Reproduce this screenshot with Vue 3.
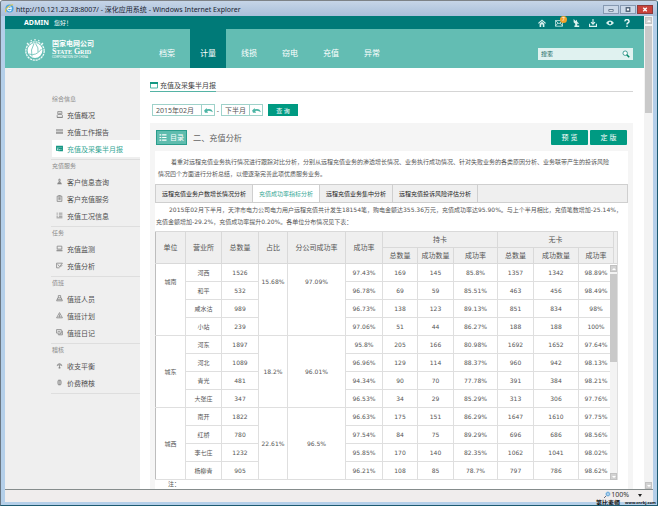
<script setup>
import { ref } from 'vue'

const navItems = ['档案', '计量', '线损', '窃电', '充值', '异常']
const activeNav = ref('计量')

const menuGroups = [
  {
    title: '综合信息',
    items: [
      { label: '充值概况', icon: 'M3 1h7v5H3zM4 4h5M2 7v4h9V7M2 11h9' },
      { label: '充值工作报告', icon: 'M0 3h12M0 5h12M0 8h12M0 9h12' },
      { label: '充值及采集半月报', icon: 'M1 2h10v3H1zM1 3h10M1 5v4h3M5 6h6v4H5zM7 8h3' },
    ],
  },
  {
    title: '充值服务',
    items: [
      { label: '客户信息查询', icon: 'M5 2h2v4H5zM4 8h4v1H4zM2 10h8M3 9h6' },
      { label: '客户充值服务', icon: 'M2 2h8v9H2zM4 1h4M4 4h4M4 6h4M4 8h4' },
      { label: '充值工况信息', icon: 'M1 2h2M5 2h6M1 5h2M5 5h6M1 8h2M5 8h6M1 10h10' },
    ],
  },
  {
    title: '任务',
    items: [
      { label: '充值监测', icon: 'M2 2h8v5H2zM1 9h10M1 10h10' },
      { label: '充值分析', icon: 'M1 2h10M1 2v8h5M3 4l3 4l5-6M7 9l4-4' },
    ],
  },
  {
    title: '值班',
    items: [
      { label: '值班人员', icon: 'M4 5V1h4v4M3 5h6l2 5H1zM2 8h8' },
      { label: '值班计划', icon: 'M6 1l5 9H1zM6 4v3M6 8v1M4 8h4' },
      { label: '值班日记', icon: 'M1 1h8v6H1zM4 8v2h7V3M3 4h4M9 7l-3 3' },
    ],
  },
  {
    title: '稽核',
    items: [
      { label: '收支平衡', icon: 'M2 7a4 4 0 1 1 8 0M4 6a2 2 0 1 1 4 0M6 5v6M4 10h4' },
      { label: '价费稽核', icon: 'M3 3h6M2 5h8M2 7h8M3 9h6M4 2h4M4 10h4' },
    ],
  },
]
const activeMenu = ref('充值及采集半月报')

const tabs = ['远程充值业务户数增长情况分析', '充值成功率指标分析', '远程充值业务集中分析', '远程充值投诉风险评估分析']
const activeTab = ref('充值成功率指标分析')

const month = ref('2015年02月')
const half = ref('下半月')
const keyword = ref('')

const columns = ['unit', 'office', 'total', 'share', 'branch', 'rate', 'a1', 'a2', 'a3', 'b1', 'b2', 'b3', 'gutter']

const units = [
  {
    name: '城南', share: '15.68%', rate: '97.09%',
    rows: [
      ['河西', '1526', '97.43%', '169', '145', '85.8%', '1357', '1342', '98.89%'],
      ['和平', '532', '96.78%', '69', '59', '85.51%', '463', '456', '98.49%'],
      ['咸水沽', '989', '96.73%', '138', '123', '89.13%', '851', '834', '98%'],
      ['小站', '239', '97.06%', '51', '44', '86.27%', '188', '188', '100%'],
    ],
  },
  {
    name: '城东', share: '18.2%', rate: '96.01%',
    rows: [
      ['河东', '1897', '95.8%', '205', '166', '80.98%', '1692', '1652', '97.64%'],
      ['河北', '1089', '96.96%', '129', '114', '88.37%', '960', '942', '98.13%'],
      ['青光', '481', '94.34%', '90', '70', '77.78%', '391', '384', '98.21%'],
      ['大张庄', '347', '96.53%', '34', '29', '85.29%', '313', '306', '97.76%'],
    ],
  },
  {
    name: '城西', share: '22.61%', rate: '96.5%',
    rows: [
      ['南开', '1822', '96.63%', '175', '151', '86.29%', '1647', '1610', '97.75%'],
      ['红桥', '780', '97.54%', '84', '75', '89.29%', '696', '686', '98.56%'],
      ['李七庄', '1232', '95.85%', '170', '140', '82.35%', '1062', '1041', '98.02%'],
      ['杨柳青', '905', '96.21%', '108', '85', '78.7%', '797', '786', '98.62%'],
    ],
  },
]
</script>

<template>
  <div class="window">
    <header class="titlebar">
      <svg class="ie" viewBox="0 0 10 10">
        <circle cx="5" cy="5" r="4.500" fill="#4aa3df" />
        <path d="M3 5h4a2 2 0 0 0-4 0a2 2 0 0 0 4 1" fill="none" stroke="#e8f5ff" stroke-width="1.2" />
        <path d="M1 9C-1 6 6 0 9 1" fill="none" stroke="#e8c544" stroke-width="1.2" />
      </svg>
      <span class="caption">http://10.121.23.28:8007/ - 深化应用系统 - Windows Internet Explorer</span>
      <button class="win" aria-label="最小化"><svg viewBox="0 0 15 8"><path d="M5 4h5v2H5z" fill="#fff" stroke="#5c6f86" /></svg></button>
      <button class="win" aria-label="最大化"><svg viewBox="0 0 15 8"><path d="M5.500 2h4v4h-4z" fill="#fff" stroke="#55667b" stroke-width="1.500" /></svg></button>
      <button class="win close" aria-label="关闭"><svg viewBox="0 0 15 8"><path d="M5.500 2l4 4M9.500 2l-4 4" stroke="#fff" stroke-width="1.600" /></svg></button>
    </header>

    <div class="viewport">
      <div class="page">
        <div class="topbar">
          <b>ADMIN</b><span class="hello">您好！</span>
          <nav class="tools">
            <a href="#" aria-label="首页"><svg viewBox="0 0 10 10"><path d="M0 5l5-4.500L10 5L9 6L5 2.500L1 6zM2 6l3-2.500L8 6v4H6V7H4v3H2z" fill="#d9f1ee" /></svg></a>
            <a href="#" class="mail" aria-label="消息"><svg viewBox="0 0 10 10"><path d="M.5 2h9v7h-9zL5 6l4.500-4M.5 9l3-4M9.500 9L6.500 5" fill="none" stroke="#d9f1ee" /></svg><i class="badge">7</i></a>
            <a href="#" aria-label="信号"><svg viewBox="0 0 10 10"><path d="M2 0l2.500 2.500L6 1l.5 2.500L9 6H6.500v2H9v2H3V8h1V6L2 4z" fill="#d9f1ee" /></svg></a>
            <a href="#" aria-label="下载"><svg viewBox="0 0 10 10"><path d="M5 0v6M2.500 4L5 6.500L7.500 4M.7 6v3.200h8.600V6" fill="none" stroke="#d9f1ee" stroke-width="1.400" /></svg></a>
            <a href="#" aria-label="查看"><svg viewBox="0 0 10 10"><path d="M0 5Q5-1 10 5Q5 11 0 5z" fill="#d9f1ee" /><circle cx="5" cy="5" r="1.600" fill="#007a78" /></svg></a>
            <a href="#" aria-label="帮助"><svg viewBox="0 0 10 10"><path d="M2.500 3a2.500 2.300 0 1 1 3.500 2Q5 5.500 5 7M5 8.200V10" fill="none" stroke="#e6f7f5" stroke-width="1.800" /></svg></a>
          </nav>
        </div>

        <div class="banner">
          <div class="brand">
            <svg class="logo" viewBox="0 0 22 22">
              <circle cx="11" cy="12" r="9.200" fill="none" stroke="#eefaf8" stroke-width="1.300" stroke-dasharray="2.200 .7" />
              <circle cx="11" cy="11.500" r="7.400" fill="#fff" />
              <path d="M10 4.500Q6 11 8 17.500M11.500 4.500Q15 9 14 13M5 15Q12 17.500 17.500 10" fill="none" stroke="#63bdb3" stroke-width=".8" />
              <path d="M3 4l1 1M7 1l.5 1.200M11 0v1.500M15 1l-.5 1.200M19 4l-1 1" stroke="#eefaf8" stroke-width="1.300" />
            </svg>
            <div class="brand-text">
              <strong class="cn">国家电网公司</strong>
              <strong class="en">State Grid</strong>
              <span class="corp">CORPORATION OF CHINA</span>
            </div>
          </div>
          <nav class="nav">
            <a v-for="item in navItems" :key="item" href="#" :class="{ active: item === activeNav }" @click.prevent="activeNav = item">{{ item }}</a>
          </nav>
          <form class="search" @submit.prevent>
            <input v-model="keyword" type="text" placeholder="搜索" aria-label="搜索">
            <button aria-label="搜索"><svg viewBox="0 0 10 10"><circle cx="4" cy="4" r="2.800" fill="#fff" stroke="#1d8c80" /><path d="M6 6l3 3" stroke="#086" stroke-width="2" /></svg></button>
          </form>
        </div>

        <div class="columns">
          <aside class="sidebar">
            <section v-for="group in menuGroups" :key="group.title" class="group">
              <h3>{{ group.title }}</h3>
              <a v-for="item in group.items" :key="item.label" href="#" :class="{ active: item.label === activeMenu }" @click.prevent="activeMenu = item.label">
                <svg viewBox="0 0 12 12"><path :d="item.icon" /></svg>{{ item.label }}
              </a>
            </section>
          </aside>

          <main class="main">
            <div class="heading">
              <h2>
                <svg viewBox="0 0 8 8"><path d="M.5 3v4h7V3" fill="none" stroke="#4db5a5" /><path d="M0 1h8v2H0z" fill="#159783" /></svg>充值及采集半月报
              </h2>
            </div>

            <form class="filter" @submit.prevent>
              <span class="picker month">
                <input v-model="month" type="text" aria-label="月份">
                <button aria-label="选择月份"><svg viewBox="0 0 10 8"><path d="M0 4l3-3v1.500Q9 1 10 6Q7 3.500 3.500 4.500L4.500 6.500H1z" fill="#4db5a5" /></svg></button>
              </span>
              <span class="dash">-</span>
              <span class="picker half">
                <input v-model="half" type="text" aria-label="半月">
                <button aria-label="选择半月"><svg viewBox="0 0 10 8"><path d="M0 4l3-3v1.500Q9 1 10 6Q7 3.500 3.500 4.500L4.500 6.500H1z" fill="#4db5a5" /></svg></button>
              </span>
              <button class="query">查 询</button>
            </form>

            <div class="panel">
              <div class="panel-head">
                <button class="toc"><svg viewBox="0 0 8 8"><path d="M0 1h2M3 1h5M0 4h2M3 4h5M0 7h2M3 7h5" stroke="#fff" stroke-width="1.300" /></svg>目录</button>
                <h3>二、充值分析</h3>
                <button class="action">预 览</button>
                <button class="action">定 版</button>
              </div>
              <div class="sheet">
                <p class="intro">着重对远程充值业务执行情况进行跟踪对比分析，分别从远程充值业务的渗透增长情况、业务执行成功情况、针对失败业务的各类原因分析、业务联带产生的投诉风险<br>情况四个方面进行分析总结，以便逐渐完善此项优质服务业务。</p>
                <div class="tabs" role="tablist">
                  <button v-for="tab in tabs" :key="tab" role="tab" :aria-selected="tab === activeTab" :class="{ active: tab === activeTab }" @click="activeTab = tab">{{ tab }}</button>
                </div>
                <p class="summary">2015年02月下半月，天津市电力公司电力用户远程充值共计发生18154笔，购电金额达355.36万元，充值成功率达95.90%。与上个半月相比，充值笔数增加-25.14%，<br>充值金额增加-29.2%，充值成功率提升0.20%。各单位分布情况见下表：</p>

                <div class="table-box">
                  <table>
                    <colgroup><col v-for="c in columns" :key="c" :class="c"></colgroup>
                    <thead>
                      <tr>
                        <th rowspan="2">单位</th>
                        <th rowspan="2">营业所</th>
                        <th rowspan="2">总数量</th>
                        <th rowspan="2">占比</th>
                        <th rowspan="2">分公司成功率</th>
                        <th rowspan="2">成功率</th>
                        <th colspan="3">持卡</th>
                        <th colspan="3">无卡</th>
                        <th rowspan="2"></th>
                      </tr>
                      <tr>
                        <th>总数量</th><th>成功数量</th><th>成功率</th>
                        <th>总数量</th><th>成功数量</th><th>成功率</th>
                      </tr>
                    </thead>
                    <tbody v-for="unit in units" :key="unit.name">
                      <tr v-for="(row, i) in unit.rows" :key="row[0]">
                        <td v-if="i === 0" rowspan="4" class="span">{{ unit.name }}</td>
                        <td>{{ row[0] }}</td>
                        <td>{{ row[1] }}</td>
                        <td v-if="i === 0" rowspan="4" class="span">{{ unit.share }}</td>
                        <td v-if="i === 0" rowspan="4" class="span">{{ unit.rate }}</td>
                        <td v-for="n in 6" :key="n">{{ row[n + 1] }}</td>
                        <td colspan="2" class="last">{{ row[8] }}</td>
                      </tr>
                    </tbody>
                  </table>
                  <div class="scroll inner"><i class="arrow up"></i><i class="thumb"></i><i class="arrow down"></i></div>
                </div>
                <p class="note">注：</p>
              </div>
            </div>
          </main>
        </div>
      </div>
      <div class="scroll outer"><i class="arrow up"></i><i class="thumb"></i><i class="arrow down"></i></div>
    </div>

    <footer class="status">
      <svg class="lens" viewBox="0 0 8 8"><circle cx="4.500" cy="3.500" r="2.600" fill="#3c8fd0" stroke="#bcd6ea" /><path d="M3 3.500h3M4.500 2v3" stroke="#fff" stroke-width=".8" /><path d="M2.500 5.500L0 8" stroke="#556" /></svg>
      <span>100%</span>
      <i class="caret"></i>
      <div class="mark"><b>第比素师</b><b class="url">www.cnrkj.com</b></div>
    </footer>
  </div>
</template>

<style>
body { margin: 0; }
</style>

<style scoped>
* { box-sizing: border-box; }
.window {
  position: relative;
  display: flex;
  flex-direction: column;
  height: 100vh;
  padding: 0 4px 3px;
  overflow: hidden;
  background: #b4cfe9;
  border: 1px solid #1d5a70;
  border-top-color: #7d8287;
  border-left-color: #6b7884;
  border-radius: 3px 3px 0 0;
  font-family: 'Noto Sans', 'Noto Sans CJK SC', sans-serif;
  font-size: 7px;
  color: #555;
}
button, input { font: inherit; color: inherit; margin: 0; padding: 0; border: 0; border-radius: 0; background: none; }
input { min-width: 0; outline: 0; }
a { color: inherit; text-decoration: none; }
h2, h3, p { margin: 0; font-weight: 400; }
i { font-style: normal; }
svg { display: block; flex: none; }

.titlebar {
  display: flex;
  flex: none;
  align-items: center;
  gap: 1px;
  height: 15px;
  margin: 0 -4px;
  padding: 0 4px;
  background: linear-gradient(#c6d5e7, #a9bfda);
}
.ie { width: 9px; height: 9px; }
.caption { flex: 1; padding-left: 1px; color: #1b2430; white-space: nowrap; }
.win { width: 16px; height: 9px; margin-top: 2px; border: 1px solid #8699b1; background: #cbd8e8; }
.win svg { width: 100%; height: 100%; }
.close { background: #c9423a; border-color: #8d3a3a; }

.viewport { display: flex; flex: 1; min-height: 0; background: #fff; border-bottom: 1px solid #858c8c; }
.page { display: flex; flex-direction: column; flex: 1; min-width: 0; overflow: hidden; }

.topbar { display: flex; flex: none; align-items: center; height: 13px; padding: 0 13px 0 19px; background: #007a78; color: #fff; }
.hello { flex: 1; padding-left: 5px; font-size: 6px; }
.tools { display: flex; gap: 9px; }
.tools a { position: relative; }
.tools svg { width: 8px; height: 8px; }
.badge { position: absolute; left: 5px; top: -3px; width: 7px; height: 7px; border-radius: 50%; background: #f0a22c; font-size: 5px; line-height: 7px; text-align: center; }

.banner { display: flex; flex: none; height: 39px; padding-right: 11px; background: #63bdb3; color: #fff; }
.brand { display: flex; align-items: center; gap: 6px; width: 141px; padding: 2px 0 0 19px; }
.logo { width: 22px; height: 22px; }
.brand-text { display: flex; flex-direction: column; white-space: nowrap; }
.cn { font-size: 7px; line-height: 8px; }
.en { font-family: 'Liberation Serif', serif; font-size: 8px; line-height: 7px; font-variant: small-caps; }
.corp { font-size: 3px; line-height: 4px; }
.nav { display: flex; flex: 1; gap: 5px; margin-left: 3px; }
.nav a { width: 36px; padding-top: 9px; font-size: 8px; line-height: 29px; text-align: center; }
.nav .active { background: #007a78; }
.search { display: flex; align-items: center; width: 95px; height: 12px; margin-top: 19px; padding: 0 3px; background: #e0f2f0; color: #17675f; font-size: 6px; }
.search input { flex: 1; }
.search input::placeholder { color: #17675f; opacity: 1; }
.search svg { width: 8px; height: 8px; }

.columns { display: flex; flex: 1; min-height: 0; }
.sidebar { flex: none; width: 135px; padding: 25px 0 0 46px; background: #efefef; }
.group { padding-bottom: 2px; border-bottom: 1px solid #dedede; }
.group h3 { padding-left: 1px; font-size: 6px; line-height: 13px; color: #8a8a8a; }
.group a { display: flex; align-items: center; gap: 4px; height: 17px; padding-left: 4px; margin-left: 1px; color: #4f4f4f; }
.group svg { width: 7px; height: 7px; fill: none; stroke: #777; stroke-width: 1.200; }
.group .active { background: #fff; color: #35a795; }
.group .active svg { stroke: #159783; stroke-width: 1.800; }

.main { display: flex; flex-direction: column; flex: 1; min-width: 0; padding: 10px 11px 0 10px; }
.heading { display: flex; flex: none; height: 14px; border-bottom: 1px solid #d5d5d5; }
.heading h2 { display: flex; align-items: center; gap: 2px; height: 14px; border-bottom: 1px solid #55b3a5; font-size: 7px; color: #444; }
.heading svg { width: 8px; height: 8px; }
.filter { display: flex; flex: none; align-items: center; margin: 12px 0 7px 2px; }
.picker { display: flex; height: 12px; border: 1px solid #9fd2ca; background: #fff; }
.month { width: 63px; }
.half { width: 42px; }
.picker input { flex: 1; width: 0; padding-left: 3px; color: #555; }
.picker button { display: flex; align-items: center; justify-content: center; width: 13px; border-left: 1px solid #9fd2ca; }
.picker svg { width: 9px; height: 7px; }
.dash { width: 6px; text-align: center; }
.query { width: 30px; height: 12px; margin-left: 5px; background: #009a82; color: #fff; font-size: 6px; }

.panel { flex: 1; min-height: 0; padding: 0 5px; background: #f5f5f5; }
.panel-head { display: flex; align-items: center; gap: 2px; height: 28px; padding: 0 1px; }
.panel-head h3 { flex: 1; padding-left: 4px; color: #666; }
.toc { display: flex; align-items: center; justify-content: center; gap: 3px; width: 31px; height: 15px; border: 1px solid #2a9d8c; background: #5fbcae; color: #fff; }
.toc svg { width: 8px; height: 7px; }
.action { width: 37px; height: 15px; border-radius: 1px; background: #009a82; color: #fff; }

.sheet { height: 100%; background: #fff; font-family: 'DejaVu Sans', 'Noto Sans CJK SC', sans-serif; font-size: 6px; }
.intro, .summary { line-height: 12px; white-space: nowrap; }
.intro { padding: 5px 0 4px 3px; text-indent: 13px; }
.summary { padding: 1px 0 3px 1px; text-indent: 13px; }
.tabs { display: flex; height: 19px; background: #efefef; border: 1px solid #cfcfcf; }
.tabs button { padding: 0 6px; border-right: 1px solid #cfcfcf; color: #222; white-space: nowrap; }
.tabs .active { background: #fff; color: #35a795; }

.table-box { position: relative; margin-right: 11px; }
table { width: 100%; table-layout: fixed; border-collapse: collapse; text-align: center; }
.unit { width: 30px; } .office { width: 36px; } .total { width: 37px; } .share { width: 29px; }
.branch { width: 58px; } .rate { width: 37px; } .a1 { width: 35px; } .a2 { width: 36px; }
.a3 { width: 44px; } .b1 { width: 36px; } .b2 { width: 45px; } .b3 { width: 35px; } .gutter { width: 4px; }
th, td { padding: 0; border: 1px solid #dfdfdf; overflow: hidden; white-space: nowrap; }
th { height: 16px; background: #efefef; border-color: #d9d9d9; font-size: 7px; font-weight: 400; line-height: 10px; }
td { height: 18px; line-height: 10px; }
.last { padding-right: 4px; }
tbody:nth-of-type(1) .span { padding-top: 13px; vertical-align: top; }
table, th:first-child[rowspan], .span:first-child { border-left-color: #bdbdbd; }
.note { padding-left: 13px; line-height: 8px; }

.scroll { display: flex; flex-direction: column; background: #f3f3f3; }
.scroll .thumb { background: #c9c9c9; }
.arrow { display: flex; align-items: center; justify-content: center; height: 7px; background: #d2d2d2; border: 1px solid #c2c2c2; }
.arrow::after { content: ''; border: solid transparent; border-width: 2px; }
.up::after { border-bottom-color: #fff; border-top-width: 0; }
.down::after { border-top-color: #fff; border-bottom-width: 0; }
.scroll .down { margin-top: auto; }
.inner { position: absolute; top: 34px; right: 0; bottom: 0; width: 7px; }
.inner .thumb { height: 88px; margin-top: 2px; }
.outer { flex: none; width: 9px; padding: 1px 1px 0; }
.outer .thumb { height: 87px; margin-top: 2px; }

.status { position: relative; display: flex; flex: none; align-items: flex-start; justify-content: flex-end; height: 12px; padding: 1px 11px 0 0; background: #f0eded; color: #333; line-height: 8px; }
.lens { width: 7px; height: 7px; }
.caret { margin: 3px 0 0 9px; border: solid transparent; border-width: 3px 2px 0; border-top-color: #222; }
.mark { position: absolute; right: -3px; bottom: -4px; display: flex; align-items: flex-end; gap: 5px; font-size: 6px; line-height: 6px; color: #111; white-space: nowrap; }
.url { font-size: 4px; }
</style>
